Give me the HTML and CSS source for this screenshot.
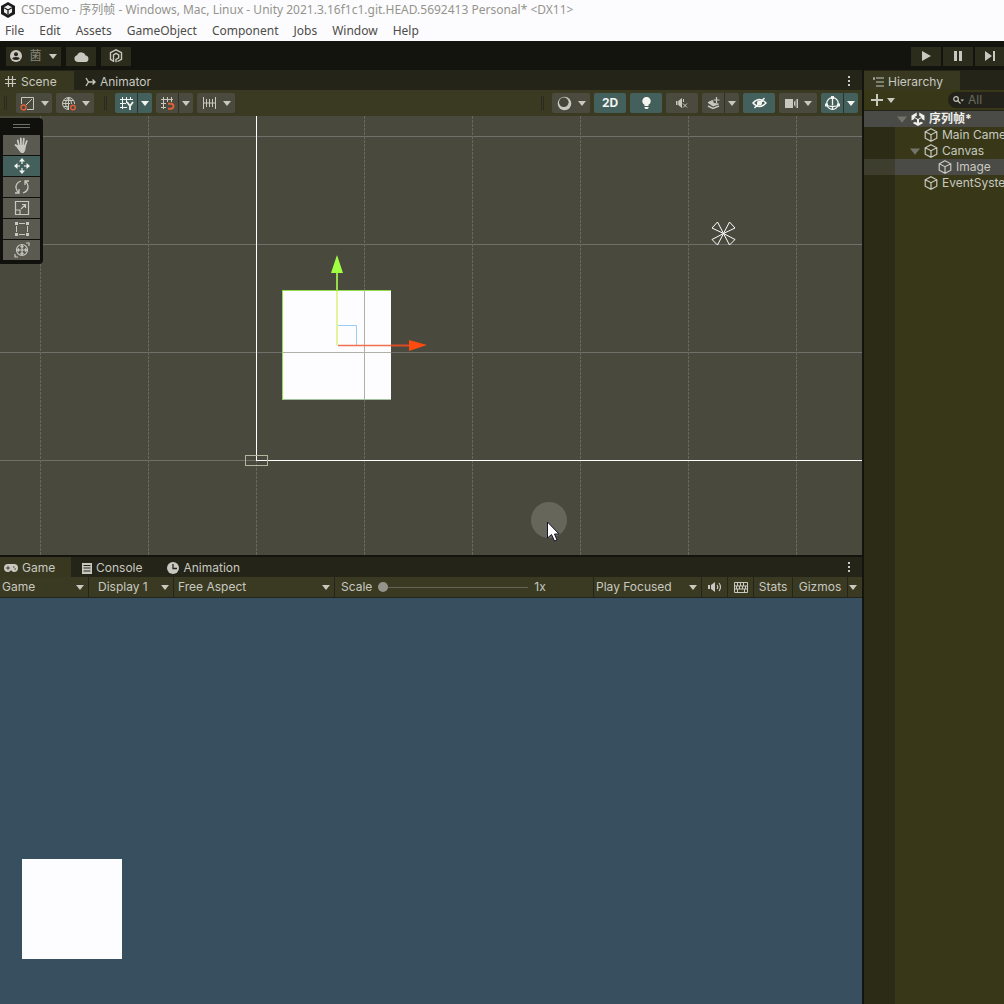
FILE: index.html
```html
<!DOCTYPE html>
<html lang="en">
<head>
<meta charset="utf-8">
<title>CSDemo - Unity</title>
<link rel="stylesheet" href="styles.css">
</head>
<body>
<svg class="defs" aria-hidden="true">
  <symbol id="caret" viewBox="0 0 8 5"><path d="M0 0h8L4 5z" fill="currentColor"/></symbol>
  <symbol id="cube" viewBox="0 0 14 14"><path d="M7 .8 12.8 3.8v6.4L7 13.3 1.2 10.2V3.800zM1.200 3.800 7 6.700l5.800-2.900M7 6.700v6.600" fill="none" stroke="currentColor" stroke-width="1.200"/></symbol>
  <symbol id="unity" viewBox="0 0 14 14"><path d="M5.800.500v3.200L3.600 5l1.200.8L7 7.100l2.200-1.300L10.400 5 8.200 3.700V.5L13.500 3.600v5l-2.800-1.600V5.800L8 7.600v3.200l2-1.100 2.300 1.400L7 14l-5.300-2.900L4 9.700l2 1.100V7.600L3.300 5.800V7L.5 8.600v-5z" fill="currentColor"/></symbol>
  <symbol id="dots" viewBox="0 0 4 12"><path d="M1 1h2v2H1zM1 5h2v2H1zM1 9h2v2H1z" fill="currentColor"/></symbol>
</svg>

<header class="titlebar">
  <svg width="14" height="16" viewBox="0 0 14 16"><path d="M7 0 14 4v8l-7 4-7-4V4z" fill="#1c1c1c"/><path d="M7 3 11 5.300v5L7 12.700 3 10.300v-5z" fill="#eee"/><path d="M7 8v4.500M7 8 3.200 5.800M7 8l3.800-2.200" stroke="#1c1c1c" stroke-width="1.300"/></svg>
  <span>CSDemo - 序列帧 - Windows, Mac, Linux - Unity 2021.3.16f1c1.git.HEAD.5692413 Personal* &lt;DX11&gt;</span>
</header>
<nav class="menubar">
  <button>File</button><button>Edit</button><button>Assets</button><button>GameObject</button><button>Component</button><button>Jobs</button><button>Window</button><button>Help</button>
</nav>

<div class="topbar">
  <button class="top-btn account" aria-label="Account">
    <svg width="12" height="12" viewBox="0 0 12 12"><circle cx="6" cy="6" r="6" fill="currentColor"/><circle cx="6" cy="4.200" r="2" fill="#24241a"/><path d="M2.300 9q0-2 3.700-2t3.700 2Q6 11 2.300 9z" fill="#24241a"/></svg>
    <span class="user">菌</span>
    <svg class="caret"><use href="#caret"/></svg>
  </button>
  <button class="top-btn" aria-label="Cloud"><svg width="15" height="11" viewBox="0 0 15 11"><path d="M3.500 11a3.400 3.400 0 0 1-.4-6.700A4.500 4.500 0 0 1 11.600 4.500 3.300 3.300 0 0 1 11.800 11z" fill="currentColor"/></svg></button>
  <button class="top-btn" aria-label="Version control"><svg width="14" height="14" viewBox="0 0 14 14" fill="none" stroke="currentColor" stroke-width="1.400"><path d="M4 12 1.500 10.300V3.700L7 .8l5.500 2.900v6.600L8.500 12.500"/><path d="M4.500 13V5.800L7 4.300l2.700 1.500v3L7 10.300v3"/></svg></button>
  <div class="play">
    <button class="top-btn" aria-label="Play"><svg width="10" height="10" viewBox="0 0 10 10"><path d="M1 0 10 5 1 10z" fill="currentColor"/></svg></button>
    <button class="top-btn" aria-label="Pause"><svg width="10" height="10" viewBox="0 0 10 10"><path d="M1 0h3v10H1zM6 0h3v10H6z" fill="currentColor"/></svg></button>
    <button class="top-btn" aria-label="Step"><svg width="10" height="10" viewBox="0 0 10 10"><path d="M0 0 7 5 0 10zM8 0h2v10H8z" fill="currentColor"/></svg></button>
  </div>
</div>

<main class="workspace">
  <section class="panel scene">
    <div class="tabs">
      <button class="tab active">
        <svg width="11" height="11" viewBox="0 0 11 11"><path d="M3.500 0v11M7.500 0v11M0 3.500h11M0 7.500h11" stroke="currentColor" stroke-width="1.200"/></svg>Scene</button>
      <button class="tab">
        <svg width="11" height="10" viewBox="0 0 11 10" fill="none" stroke="currentColor" stroke-width="1.400"><path d="M1 1l2.500 4H10M1 9l2.500-4M7.500 2.500 10 5 7.500 7.500"/></svg>Animator</button>
      <button class="more" aria-label="Scene options"><svg width="4" height="12"><use href="#dots"/></svg></button>
    </div>
    <div class="tools">
      <i class="grip"></i>
      <button class="tool" aria-label="Pivot"><svg width="15" height="15" viewBox="0 0 15 15" fill="none" stroke="currentColor"><path d="M1.500 8V1.500h12v12H7M6 9l6-6"/><circle cx="3.500" cy="11.500" r="2.500" stroke="#e0603a" stroke-width="1.400"/></svg><svg class="caret"><use href="#caret"/></svg></button>
      <button class="tool wide" aria-label="Global"><svg width="15" height="15" viewBox="0 0 15 15" fill="none" stroke="currentColor"><path d="M8 13.500A6 6 0 1 1 13.500 8M7.500 1v12M1.500 7.500H9M2.500 4.500h10M2.500 10.500H8M7.500 1.500Q1.500 7.500 7.500 13.500M7.500 1.500Q11 5 10.500 8"/><circle cx="12" cy="11.500" r="2.300" stroke="#e0603a" stroke-width="1.400"/></svg><svg class="caret"><use href="#caret"/></svg></button>
      <i class="grip apart"></i>
      <span class="split on">
        <button aria-label="Grid visibility"><svg width="15" height="15" viewBox="0 0 15 15" fill="none" stroke="currentColor"><path d="M3.500 1v12M7.500 1v6M11.500 1v3M1 3.500h13M1 7.500h6M1 11.500h7"/><path d="M8 6l3 4 3-4M11 10v4" stroke-width="1.800"/></svg></button>
        <button aria-label="Grid options"><svg class="caret"><use href="#caret"/></svg></button></span>
      <span class="split">
        <button aria-label="Snapping"><svg width="15" height="15" viewBox="0 0 15 15" fill="none" stroke="currentColor"><path d="M3.500 1v12M7.500 1v5M11.500 1v5M1 3.500h12M1 7.500h5M1 11.500h5"/><path d="M8 7.800h3a2.500 2.500 0 0 1 0 5H8" stroke="#e0603a" stroke-width="2"/></svg></button>
        <button aria-label="Snap options"><svg class="caret"><use href="#caret"/></svg></button></span>
      <button class="tool wide" aria-label="Increment snap"><svg width="15" height="14" viewBox="0 0 15 14" fill="none" stroke="currentColor"><path d="M1.500 1v12M13.500 1v12M4.500 3v8M7.500 3v8M10.500 3v8M1 7h13"/></svg><svg class="caret"><use href="#caret"/></svg></button>
      <i class="grip end"></i>
      <button class="tool wide" aria-label="Draw mode"><svg width="15" height="15" viewBox="0 0 15 15"><circle cx="7.500" cy="7.500" r="6.800" fill="currentColor"/><circle cx="6.800" cy="6.300" r="4.800" fill="#46463a"/></svg><svg class="caret"><use href="#caret"/></svg></button>
      <button class="tool one on">2D</button>
      <button class="tool one on" aria-label="Lighting"><svg width="9" height="12" viewBox="0 0 9 12"><path d="M2.500 9V7.800a4.200 4.200 0 1 1 4 0V9zM2.500 10h4v1l-1 1h-2l-1-1z" fill="currentColor"/></svg></button>
      <button class="tool one" aria-label="Audio"><svg width="12" height="10" viewBox="0 0 12 10" fill="currentColor"><path d="M0 3h1.500v4H0zM2.200 3 6 0v10L2.200 7z"/><path d="M7 5.500l4 4M11 5.500l-4 4M7.500 1v3" fill="none" stroke="currentColor"/></svg></button>
      <span class="split">
        <button aria-label="Effects"><svg width="13" height="13" viewBox="0 0 13 13" fill="none" stroke="currentColor"><path d="M9.500 0v6M6.500 3h6" stroke-width="1.200"/><path d="M1 5.500l4.500-2 1 3 5 .5-5.500 2z" fill="currentColor"/><path d="M1 9l5 2.500L12 9" stroke-width="1.500"/></svg></button>
        <button aria-label="Effect options"><svg class="caret"><use href="#caret"/></svg></button></span>
      <button class="tool one on" aria-label="Hidden objects"><svg width="15" height="12" viewBox="0 0 15 12" fill="none" stroke="currentColor" stroke-width="1.500"><path d="M1 6q6.500-7 13 0-6.500 7-13 0zM2.500 11 12.500 1"/><circle cx="7.500" cy="6" r="1.800" fill="currentColor"/></svg></button>
      <button class="tool wide" aria-label="Camera"><svg width="13" height="9" viewBox="0 0 13 9" fill="currentColor"><path d="M0 0h8v9H0zM9 3l1.500-2v7L9 6zM11.500 0H13v9h-1.500z"/></svg><svg class="caret"><use href="#caret"/></svg></button>
      <span class="split on">
        <button aria-label="Gizmos"><svg width="15" height="15" viewBox="0 0 15 15" fill="none" stroke="currentColor" stroke-width="1.300"><circle cx="7.500" cy="7.500" r="5.800"/><path d="M7.500 2v7M2 9.500q5.500 2 11 0M7.500 9.500v4"/><path d="M6 0h3v3H6zM0 7.500h3v3H0zM12 7.500h3v3h-3z" fill="currentColor" stroke="none"/></svg></button>
        <button aria-label="Gizmo options"><svg class="caret"><use href="#caret"/></svg></button></span>
    </div>

    <div class="view">
      <svg class="canvas" width="100%" height="100%">
        <defs>
          <pattern id="grid" x="40" y="20" width="108" height="108" patternUnits="userSpaceOnUse">
            <path d="M0 .5h108" stroke="#70706a"/><path d="M.5 0v108" stroke="#68685e" stroke-dasharray="3 1"/>
          </pattern>
        </defs>
        <rect width="100%" height="100%" fill="url(#grid)"/>
        <path d="M256.500 0v344" stroke="#fff"/>
        <line x1="256" y1="344.500" x2="100%" y2="344.500" stroke="#fff"/>
        <rect x="245.500" y="339.500" width="22" height="10" fill="none" stroke="#b4b4a0"/>
        <rect x="283" y="175" width="108" height="109" fill="#fdfdff"/>
        <path d="M282.500 284V175M282 174.500h109" stroke="#8fdc50"/>
        <path d="M283 283.500h108" stroke="#a4c4a0"/>
        <path d="M364.500 175v109M283 236.500h108" stroke="#b0b0a6"/>
        <path d="M338 209.500h18.500V229" fill="none" stroke="#98cdf4"/>
        <path d="M337 229v-54" stroke="#e4f49a" stroke-width="2"/>
        <path d="M337 175v-20" stroke="#98dc4c" stroke-width="2"/>
        <path d="M337 139l6 18h-12z" fill="#a0ff40"/>
        <path d="M338 229.500h53" stroke="#f4704c" stroke-width="1.500"/>
        <path d="M391 229.500h19" stroke="#dc4a24" stroke-width="2"/>
        <path d="M409 224l18 5-18 6z" fill="#ff4a10"/>
        <path d="M723.500 117.500 712 112l5.500-6zM723.500 117.500l6-11.500 5.500 6zM723.500 117.500l-6 11.500-5.500-5.500zM723.500 117.500l11.500 6-5.500 5.500z" fill="none" stroke="#fff"/>
        <circle cx="549" cy="404" r="18" fill="#66665a"/>
        <path d="M547.500 406v16l4-3.500 3 6.500 2.500-1-2.500-6h4.500z" fill="#fff" stroke="#141430"/>
      </svg>
      <div class="palette">
        <i class="handle"></i>
        <button aria-label="Hand"><svg width="16" height="16" viewBox="0 0 16 16" fill="none" stroke="currentColor" stroke-linecap="round"><path d="M5 9 3.800 3.500M7 8 6.800 1.500M9.200 8 9.800 1.700M11 9l1.800-5M5 11 1.500 8" stroke-width="1.800"/><path d="M4 8.500h7.500l-.8 5-1.200 2H7l-3-4z" fill="currentColor"/></svg></button>
        <button class="on" aria-label="Move"><svg width="16" height="16" viewBox="0 0 16 16" fill="currentColor"><path d="M8 0l3 3.500H8.600V6H7.400V3.500H5zM8 16l3-3.500H8.600V10H7.400v2.500H5zM0 8l3.500-3v2.400H6v1.200H3.500V11zM16 8l-3.500-3v2.400H10v1.200h2.500V11z"/></svg></button>
        <button aria-label="Rotate"><svg width="16" height="16" viewBox="0 0 16 16" fill="none" stroke="currentColor" stroke-width="1.300"><path d="M7 2Q1.500 4 2 9q.5 3 3 5M1 14h4V10M9 14q5.500-2 5-7-.5-3-3-5M15 2h-4v4"/></svg></button>
        <button aria-label="Scale"><svg width="16" height="16" viewBox="0 0 16 16" fill="none" stroke="currentColor" stroke-width="1.200"><path d="M1.500 1.500h13v13h-13zM1.500 10h4.500v4.500M7 9l4.500-4.500M8 4.500h3.500V8"/></svg></button>
        <button aria-label="Rect"><svg width="16" height="16" viewBox="0 0 16 16"><path d="M2.500 5v6M13.500 5v6M5 2.500h6M5 13.500h6" stroke="currentColor"/><path d="M1 1h3v3H1zM12 1h3v3h-3zM1 12h3v3H1zM12 12h3v3h-3z" fill="currentColor"/></svg></button>
        <button aria-label="Transform"><svg width="16" height="16" viewBox="0 0 16 16" fill="none" stroke="currentColor" stroke-width="1.200"><circle cx="8" cy="8" r="5.500"/><path d="M8 3.500v9M3.500 8h9M6.500 5 8 3.500 9.500 5M6.500 11 8 12.500 9.500 11M5 6.500 3.500 8 5 9.500M11 6.500 12.500 8 11 9.500M12 1h3v3M1 12v3h3"/></svg></button>
      </div>
    </div>
  </section>

  <section class="panel game">
    <div class="tabs">
      <button class="tab active game-tab">
        <svg width="14" height="8" viewBox="0 0 14 8"><path d="M4 0h6a4 4 0 0 1 0 8Q8.500 8 7.500 6.500h-1Q5.500 8 4 8a4 4 0 0 1 0-8z" fill="currentColor"/><path d="M2.200 4h3.600M4 2.200v3.600M9 3h1.500M10.500 5H12" stroke="#38382a"/></svg>Game</button>
      <button class="tab">
        <svg width="10" height="11" viewBox="0 0 10 11"><path d="M0 0h10v11H0z" fill="currentColor"/><path d="M1.500 2.500h7M1.500 5h7M1.500 8h7" stroke="#24241c"/></svg>Console</button>
      <button class="tab animation">
        <svg width="12" height="12" viewBox="0 0 12 12"><circle cx="6" cy="6" r="6" fill="currentColor"/><path d="M6 2v4.500h4" fill="none" stroke="#24241c" stroke-width="1.300"/></svg>Animation</button>
      <button class="more" aria-label="Game options"><svg width="4" height="12"><use href="#dots"/></svg></button>
    </div>
    <div class="tools options">
      <span class="drop mode"><select aria-label="Mode"><option>Game</option></select><svg class="caret"><use href="#caret"/></svg></span>
      <span class="drop display"><select aria-label="Display"><option>Display 1</option></select><svg class="caret"><use href="#caret"/></svg></span>
      <span class="drop aspect"><select aria-label="Aspect"><option>Free Aspect</option></select><svg class="caret"><use href="#caret"/></svg></span>
      <div class="scale"><label for="scale">Scale</label><input id="scale" type="range" min="1" max="5" value="1"><output for="scale">1x</output></div>
      <span class="drop focus"><select aria-label="Play mode"><option>Play Focused</option></select><svg class="caret"><use href="#caret"/></svg></span>
      <button class="opt icon" aria-label="Mute"><svg width="14" height="10" viewBox="0 0 14 10" fill="currentColor"><path d="M0 3h2v4H0zM3 3l4-3v10L3 7z"/><path d="M9 3q1.500 2 0 4M11 1q3 4 0 8" fill="none" stroke="currentColor" stroke-width="1.200"/></svg></button>
      <button class="opt icon" aria-label="Shortcuts"><svg width="14" height="11" viewBox="0 0 14 11" fill="none" stroke="currentColor"><path d="M.5.5h13v10H.5zM0 4h14M0 7h14M3.500 1v3M6.500 1v3M9.500 1v3M2.500 4v3M5.500 4v3M8.500 4v3M11.500 4v3M3.500 7v3M10.500 7v3"/></svg></button>
      <button class="opt stats">Stats</button>
      <button class="opt gizmos">Gizmos</button>
      <button class="opt last" aria-label="Gizmo list"><svg class="caret"><use href="#caret"/></svg></button>
    </div>
    <div class="view play-view"><div class="sprite"></div></div>
  </section>

  <aside class="panel hierarchy">
    <div class="tabs">
      <button class="tab active hier-tab">
        <svg width="11" height="10" viewBox="0 0 11 10" stroke="currentColor" stroke-width="1.200"><path d="M0 1h2M3 1h8M3 5h8M3 9h8M1 1v2"/></svg>Hierarchy</button>
    </div>
    <div class="hier-tools">
      <button class="add" aria-label="Create"><svg width="12" height="12" viewBox="0 0 12 12"><path d="M6 0v12M0 6h12" stroke="currentColor" stroke-width="2"/></svg><svg class="caret"><use href="#caret"/></svg></button>
      <label class="search"><svg width="11" height="8" viewBox="0 0 11 8" fill="none" stroke="currentColor" stroke-width="1.200"><circle cx="3" cy="3" r="2.300"/><path d="M4.700 4.700 7.500 7.500"/><path d="M7.500 3.500H11L9.200 5.500z" fill="currentColor" stroke="none"/></svg><input type="text" placeholder="All" aria-label="Search hierarchy"></label>
    </div>
    <ul class="tree">
      <li class="root"><svg class="fold"><use href="#caret"/></svg><svg class="obj"><use href="#unity"/></svg><b>序列帧*</b></li>
      <li class="child"><svg class="obj"><use href="#cube"/></svg>Main Camera</li>
      <li class="child open"><svg class="fold"><use href="#caret"/></svg><svg class="obj"><use href="#cube"/></svg>Canvas</li>
      <li class="leaf selected"><svg class="obj"><use href="#cube"/></svg>Image</li>
      <li class="child"><svg class="obj"><use href="#cube"/></svg>EventSystem</li>
    </ul>
  </aside>
</main>
</body>
</html>
```
FILE: styles.css
```css
* { box-sizing: border-box; }
body {
  margin: 0;
  min-height: 100vh;
  display: flex;
  flex-direction: column;
  background: #14140e;
  color: #c8c8c0;
  font: 12px/16px Inter, "Noto Sans CJK SC", sans-serif;
  overflow-x: hidden;
}
button, select, input {
  font: inherit;
  color: inherit;
  border: 0;
  margin: 0;
  padding: 0;
  background: none;
}
svg { flex: none; display: block; }
.defs { position: absolute; width: 0; height: 0; }
.caret { width: 8px; height: 5px; }

.titlebar, .menubar {
  background: #fcfcff;
  font-family: "Noto Sans", "Noto Sans CJK SC", sans-serif;
  white-space: nowrap;
  display: flex;
  align-items: center;
}
.titlebar { height: 20px; padding-left: 1px; gap: 6px; color: #94948c; }
.menubar { height: 21px; padding-left: 5px; gap: 15px; color: #4c4c48; }

.topbar {
  height: 29px;
  padding: 1px 0 0 6px;
  display: flex;
  align-items: center;
  gap: 5px;
}
.top-btn {
  width: 30px;
  height: 19px;
  display: flex;
  align-items: center;
  justify-content: center;
  background: #2c2c1c;
}
.top-btn.account { width: 55px; gap: 7px; }
.user { color: #88887c; }
.play { margin-left: auto; display: flex; gap: 2px; }
.play .top-btn:last-child { width: 29px; }

.workspace {
  flex: 1;
  display: grid;
  grid-template-columns: minmax(0, 1fr) 140px;
  grid-template-rows: 485fr 447fr;
  gap: 2px;
}
.panel { display: flex; flex-direction: column; min-width: 0; overflow: hidden; }
.hierarchy { grid-column: 2; grid-row: 1 / 3; background: #383818; }

.tabs { display: flex; height: 20px; padding-top: 1px; background: #242418; }
.game .tabs { padding-top: 0; }
.tab { display: flex; align-items: center; gap: 4px; padding: 2px 11px 0; }
.tab.active { width: 74px; padding: 2px 0 0 5px; gap: 5px; background: #383820; }
.tab.active.game-tab { width: 71px; padding-left: 4px; gap: 4px; }
.tab.active.hier-tab { width: 96px; padding-left: 9px; gap: 4px; }
.tab.animation { padding-left: 14px; }
.more { margin-left: auto; padding: 0 11px; }

.tools { display: flex; align-items: center; gap: 4px; height: 26px; padding: 0 4px; background: #3a3a22; }
.grip { width: 3px; height: 14px; margin-right: 5px; border: solid #2a2a20; border-width: 0 1px; }
.grip.apart { margin: 0 4px 0 6px; }
.grip.end { margin-left: auto; margin-right: 4px; }
.tool, .split { height: 20px; background: #4a4a3e; border-radius: 2px; }
.tool { width: 36px; display: flex; align-items: center; justify-content: center; gap: 6px; }
.tool.wide { width: 38px; }
.tool.one { width: 32px; font-weight: 700; }
.split { width: 37px; display: flex; }
.split button { flex: 1; display: flex; align-items: center; justify-content: center; }
.split button:first-child { flex: none; width: 23px; border-right: 1px solid #30302a; }
.tool.on, .split.on { background: #44605c; color: #f4f4f0; }

.view { flex: 1; position: relative; overflow: hidden; background: #49493e; }
.canvas { position: absolute; inset: 0; }
.palette {
  position: absolute;
  left: 0;
  top: 2px;
  padding: 0 3px 4px;
  display: flex;
  flex-direction: column;
  gap: 1px;
  background: #10100c;
  border-radius: 0 4px 4px 0;
}
.handle { height: 4px; margin: 6px 10px; border: solid #70706a; border-width: 1px 0; }
.palette button { width: 37px; height: 20px; display: flex; align-items: center; justify-content: center; background: #5a5a50; }
.palette .on { background: #44605c; color: #f4f4f0; }

.tools.options { height: 21px; padding: 0; gap: 0; border-bottom: 1px solid #24241c; }
.drop { display: grid; align-items: center; height: 100%; border-right: 1px solid #24241c; }
.drop > * { grid-area: 1 / 1; }
.drop select { width: 100%; height: 20px; appearance: none; outline: 0; }
.drop .caret { justify-self: end; margin-right: 4px; pointer-events: none; }
.mode { width: 89px; padding-left: 2px; }
.display { width: 85px; padding-left: 9px; }
.aspect { width: 161px; padding-left: 4px; }
.focus { width: 109px; padding-left: 2px; border-left: 1px solid #24241c; }
.scale { flex: 1; display: flex; align-items: center; gap: 6px; padding-left: 6px; }
.scale input { width: 150px; height: 10px; appearance: none; background: linear-gradient(#64645c, #64645c) center / 100% 1px no-repeat; }
.scale input::-webkit-slider-thumb { appearance: none; width: 10px; height: 10px; border-radius: 50%; background: #94948c; }
.opt { height: 20px; display: flex; align-items: center; justify-content: center; border-right: 1px solid #24241c; }
.opt.icon { width: 26px; }
.stats { width: 39px; }
.gizmos { width: 55px; }
.opt.last { width: 14px; border: 0; padding-right: 4px; }
.play-view { background: #374f5e; display: flex; align-items: flex-end; padding: 0 0 45px 22px; }
.sprite { width: 100px; height: 100px; background: #fdfdff; }

.hier-tools { height: 20px; display: flex; align-items: center; gap: 53px; padding-left: 7px; }
.add { display: flex; align-items: center; gap: 4px; }
.search { flex: none; width: 160px; height: 16px; display: flex; align-items: center; gap: 4px; padding-left: 5px; border-radius: 8px; background: #22221a; }
.search input { width: 120px; height: 16px; outline: 0; }
.search input::placeholder { color: #6c6c62; opacity: 1; }
.tree {
  flex: 1;
  margin: 0;
  padding: 0;
  list-style: none;
  white-space: nowrap;
  border-top: 1px solid #24241c;
  background: linear-gradient(90deg, #2c2c16 31px, transparent 31px);
}
.tree li { display: flex; align-items: center; height: 16px; }
.obj { width: 14px; height: 14px; margin-right: 4px; }
.fold { width: 10px; height: 7px; margin-right: 4px; color: #74746a; }
.root { padding-left: 33px; background: #4a4a46; color: #f0f0ea; }
.child { padding-left: 60px; }
.child.open { padding-left: 46px; }
.leaf { padding-left: 74px; }
.selected { background: linear-gradient(90deg, #3e3e2e 31px, #4a4a46 31px); }
```
